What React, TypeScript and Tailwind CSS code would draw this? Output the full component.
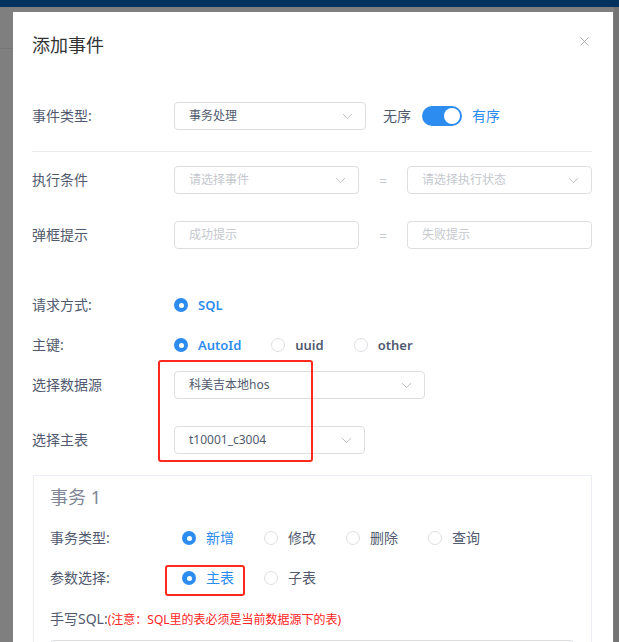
import { ChevronDown, X } from "lucide-react";

const font = "font-['Noto_Sans','Noto_Sans_CJK_SC',sans-serif]";

function Select({ value, placeholder, width }: { value?: string; placeholder?: string; width: string }) {
  return (
    <div className={`${width} h-[28px] shrink-0 border border-[#dcdee2] rounded-[4px] bg-white flex items-center justify-between pl-[14px] pr-[9px]`}>
      <span className={`text-[12px] leading-[16px] ${value ? "text-[#515a6e]" : "text-[#c5c8ce]"}`}>
        {value ?? placeholder}
      </span>
      <ChevronDown size={17} strokeWidth={1.1} className="text-[#a8abb2]" />
    </div>
  );
}

function Input({ placeholder }: { placeholder: string }) {
  return (
    <div className="flex-1 h-[28px] border border-[#dcdee2] rounded-[4px] bg-white flex items-center pl-[14px]">
      <span className="text-[12px] leading-[16px] text-[#c5c8ce]">{placeholder}</span>
    </div>
  );
}

function Radio({ label, checked, strong }: { label: string; checked?: boolean; strong?: boolean }) {
  return (
    <div className="flex items-center gap-[10px]">
      {checked ? (
        <span className="w-[14px] h-[14px] rounded-full bg-[#2d8cf0] flex items-center justify-center">
          <span className="w-[5px] h-[5px] rounded-full bg-white" />
        </span>
      ) : (
        <span className="w-[14px] h-[14px] rounded-full border border-[#dcdee2] bg-white" />
      )}
      <span
        className={`leading-[20px] ${strong ? "text-[13px] font-semibold" : "text-[14px]"} ${
          checked ? "text-[#2d8cf0]" : "text-[#515a6e]"
        }`}
      >
        {label}
      </span>
    </div>
  );
}

function Row({ label, children, width = "w-[142px]" }: { label: string; children: React.ReactNode; width?: string }) {
  return (
    <div className="flex items-center h-[28px]">
      <div className={`${width} shrink-0 text-[14px] leading-[20px] text-[#515a6e]`}>{label}</div>
      {children}
    </div>
  );
}

export default function App() {
  return (
    <div className={`${font} relative w-[619px] h-[642px] overflow-hidden bg-[#7f7f7f]`}>
      <div className="h-[7px] bg-[#03325f]" />
      <div className="mt-[41px] h-px bg-[#767676]" />
      <div className="absolute right-0 top-[7px] bottom-0 w-[5px] bg-[#747474]" />

      {/* modal */}
      <div className="absolute left-[13px] top-[12px] w-[600px] h-[640px] bg-white">
        <div className="relative pt-[21px] pl-[19px]">
          <div className="text-[18px] leading-[24px] text-[#333]">添加事件</div>
          <X size={15} strokeWidth={1.2} className="absolute right-[21px] top-[22px] text-[#999]" />
        </div>

        <div className="pl-[19px] pr-[21px] pt-[45px]">
          <Row label="事件类型:">
            <Select value="事务处理" width="w-[192px]" />
            <span className="ml-[17px] text-[14px] leading-[20px] text-[#515a6e]">无序</span>
            <div className="ml-[11px] w-[40px] h-[20px] rounded-full bg-[#2d8cf0] flex items-center justify-end pr-[2px]">
              <span className="w-[16px] h-[16px] rounded-full bg-white" />
            </div>
            <span className="ml-[10px] text-[14px] leading-[20px] text-[#2d8cf0]">有序</span>
          </Row>

          <div className="mt-[21px] h-px bg-[#e8eaec]" />

          <div className="mt-[14px]">
            <Row label="执行条件">
              <Select placeholder="请选择事件" width="flex-1" />
              <span className="w-[48px] text-center text-[14px] text-[#c5c8ce]">=</span>
              <Select placeholder="请选择执行状态" width="flex-1" />
            </Row>
          </div>

          <div className="mt-[27px]">
            <Row label="弹框提示">
              <Input placeholder="成功提示" />
              <span className="w-[48px] text-center text-[14px] text-[#c5c8ce]">=</span>
              <Input placeholder="失败提示" />
            </Row>
          </div>

          <div className="mt-[42px]">
            <Row label="请求方式:">
              <Radio label="SQL" checked strong />
            </Row>
          </div>

          <div className="mt-[12px]">
            <Row label="主键:">
              <div className="flex items-center gap-[30px]">
                <Radio label="AutoId" checked strong />
                <Radio label="uuid" strong />
                <Radio label="other" strong />
              </div>
            </Row>
          </div>

          <div className="mt-[12px]">
            <Row label="选择数据源">
              <Select value="科美吉本地hos" width="w-[251px]" />
            </Row>
          </div>

          <div className="mt-[27px]">
            <Row label="选择主表">
              <Select value="t10001_c3004" width="w-[191px]" />
            </Row>
          </div>

          {/* transaction card */}
          <div className="mt-[21px] ml-px border border-[#ebeef5] h-[200px] pl-[16px] pr-[17px] pt-[9px]">
            <div className="text-[18px] leading-[24px] text-[#808695]">事务 1</div>

            <div className="mt-[15px]">
              <Row label="事务类型:" width="w-[132px]">
                <div className="flex items-center gap-[30px]">
                  <Radio label="新增" checked />
                  <Radio label="修改" />
                  <Radio label="删除" />
                  <Radio label="查询" />
                </div>
              </Row>
            </div>

            <div className="mt-[12px]">
              <Row label="参数选择:" width="w-[132px]">
                <div className="flex items-center gap-[30px]">
                  <Radio label="主表" checked />
                  <Radio label="子表" />
                </div>
              </Row>
            </div>

            <div className="mt-[17px] flex items-baseline leading-[20px]">
              <span className="text-[14px] text-[#515a6e]">手写SQL:</span>
              <span className="text-[12px] text-[#ff2424]">(注意：SQL里的表必须是当前数据源下的表)</span>
            </div>

            <div className="mt-[10px] h-[60px] border border-[#dcdee2] rounded-[4px]" />
          </div>
        </div>

        {/* red annotation boxes */}
        <div className="absolute left-[145px] top-[348px] w-[155px] h-[102px] border-2 border-[#ff2a1f] rounded-[3px]" />
        <div className="absolute left-[152px] top-[553px] w-[80px] h-[31px] border-2 border-[#ff2a1f] rounded-[3px]" />
      </div>
    </div>
  );
}
